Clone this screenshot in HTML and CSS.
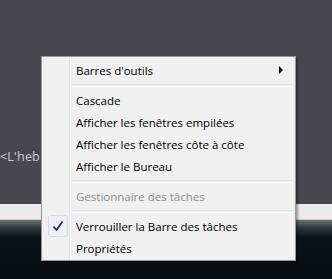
FILE: index.html
```html
<!DOCTYPE html>
<html>

<head>
    <meta charset="utf-8">
    <title>Menu barre des tâches</title>
    <link rel="stylesheet" href="styles.css">
</head>

<body>
    <!-- fond : fenêtre + barre des tâches -->
    <div class="desk">
        <div class="window">
            <span class="snippet">&lt;L'heb</span>
        </div>
        <div class="strip"></div>
        <div class="taskbar"></div>
    </div>

    <!-- menu contextuel -->
    <div class="menu">
        <ul>
            <li class="item">
                <span class="gutter"></span>
                <label class="title">Barres d'outils</label>
                <span class="arrow"></span>
            </li>
            <li class="sep"></li>
            <li class="item"><span class="gutter"></span><label class="title">Cascade</label></li>
            <li class="item"><span class="gutter"></span><label class="title">Afficher les fenêtres empilées</label></li>
            <li class="item"><span class="gutter"></span><label class="title">Afficher les fenêtres côte à côte</label></li>
            <li class="item"><span class="gutter"></span><label class="title">Afficher le Bureau</label></li>
            <li class="sep"></li>
            <li class="item disabled"><span class="gutter"></span><label class="title">Gestionnaire des tâches</label></li>
            <li class="sep"></li>
            <li class="item">
                <span class="gutter">
                    <span class="check">
                        <svg width="12" height="12" viewBox="0 0 12 12">
                            <path d="M1.5 6.5 L4.5 10 L10.5 1.5" fill="none" stroke="#1f2f63" stroke-width="1.8" stroke-linejoin="round"/>
                        </svg>
                    </span>
                </span>
                <label class="title">Verrouiller la Barre des tâches</label>
            </li>
            <li class="item"><span class="gutter"></span><label class="title">Propriétés</label></li>
        </ul>
    </div>
</body>

</html>
```

FILE: styles.css
```css
body {
    margin: 0;
    padding: 0;
    font-family: "Open Sans", "Noto Sans", sans-serif;
}
/*fond*/

.desk {
    width: 332px;
    height: 279px;
    display: flex;
    flex-direction: column;
}

.desk .window {
    height: 204px;
    background-color: #48474f;
    display: flex;
    align-items: flex-start;
}

.desk .snippet {
    margin-top: 148px;
    font-size: 12.5px;
    color: #cfced3;
    letter-spacing: .2px;
}

.desk .strip {
    height: 15px;
    background-color: #ecebec;
    border-bottom: 1px solid #c9c9c9;
}

.desk .taskbar {
    flex: 1;
    background: linear-gradient(#6c7679 0, #2c3538 8px, #0b1317 18px, #070d11 100%);
}
/*menu*/

.menu {
    position: absolute;
    left: 41px;
    top: 56px;
    width: 253px;
    background-color: #f0f0f0;
    border: 1px solid #979797;
    box-shadow: 2px 2px 2px rgba(0, 0, 0, .35);
}

.menu > ul {
    list-style-type: none;
    margin: 0;
    padding: 2px 2px 1px 2px;
    font-size: 11.5px;
    color: #000;
}

.menu > ul > li.item {
    display: flex;
    align-items: center;
    height: 22px;
}

.menu > ul > li .gutter {
    width: 26px;
    height: 100%;
    display: flex;
    align-items: center;
    justify-content: center;
    border-right: 1px solid #e2e3e3;
    box-shadow: 1px 0 0 #fff;
    box-sizing: border-box;
}

.menu > ul > li .title {
    flex: 1;
    padding-left: 6px;
}

.menu > ul > li.disabled .title {
    color: #8d8d8d;
}

.menu > ul > li .arrow {
    width: 0;
    height: 0;
    margin-right: 10px;
    border-top: 4px solid transparent;
    border-bottom: 4px solid transparent;
    border-left: 4px solid #000;
}

.menu > ul > li.sep {
    height: 8px;
    display: flex;
    align-items: center;
    padding-left: 28px;
    background: linear-gradient(to right, transparent 25px, #e2e3e3 25px, #e2e3e3 26px, #fff 26px, #fff 27px, transparent 27px);
}

.menu > ul > li.sep::after {
    content: "";
    flex: 1;
    height: 1px;
    border-top: 1px solid #e0e0e0;
    border-bottom: 1px solid #fff;
}

.menu .check {
    width: 18px;
    height: 20px;
    display: flex;
    align-items: center;
    justify-content: center;
    border: 1px solid #d4dbe6;
    border-radius: 3px;
    background-color: #eceff4;
    margin-left: 2px;
}
```
